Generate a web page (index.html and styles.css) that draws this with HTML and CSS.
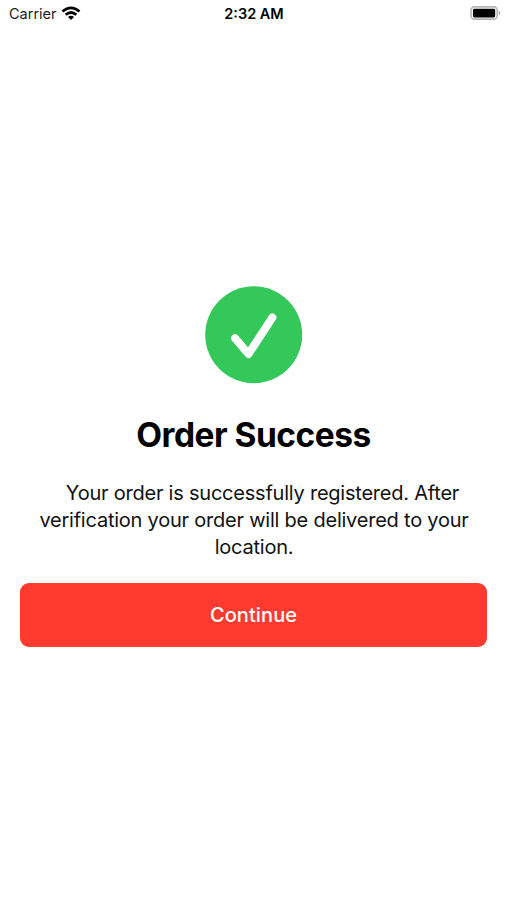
FILE: index.html
```html
<!DOCTYPE html>
<html lang="en">
<head>
<meta charset="utf-8">
<title>Order Success</title>
<link rel="stylesheet" href="styles.css">
</head>
<body>
<div class="screen">
<header class="status">
<div class="carrier"><span class="carrier-name">Carrier</span>
<svg class="wifi" viewBox="0 0 20 15" width="20" height="15"><g fill="none" stroke="#000" stroke-width="2.7"><path d="M1.5 5.5Q10 -1.7 18.5 5.5"/><path d="M4.7 8.7Q10 4.3 15.3 8.7"/></g><path d="M7 11Q10 8.6 13 11L10 14Z"/></svg></div>
<time class="clock">2:32 AM</time>
<div class="battery"><svg viewBox="0 0 31 14" width="31" height="14"><rect x="1" y=".9" width="26.2" height="12.2" rx="3.4" fill="none" stroke="#b5b5b5" stroke-width="1.6"/><rect x="3" y="2.7" width="22.2" height="8.8" rx="1.4"/><path d="M28.7 4.6Q30.4 5.5 30.4 7T28.7 9.4Z" fill="#aaa"/></svg></div>
</header>
<main class="content">
<svg class="check" viewBox="0 0 98 98" width="98" height="98"><circle cx="48.7" cy="48.7" r="48.5" fill="#34c759"/><path d="M30 52.2L43.5 68L67.4 31.5" fill="none" stroke="#fff" stroke-width="8" stroke-linecap="round" stroke-linejoin="round"/></svg>
<h1 class="title"><span>Order Success</span></h1>
<p class="message"><span class="line first">Your order is successfully registered. After</span><span class="line second">verification your order will be delivered to your</span><span class="line third">location.</span></p>
<button class="continue"><span>Continue</span></button>
</main>
</div>
</body>
</html>
```
FILE: styles.css
```css
* { box-sizing: border-box; }
body { margin: 0; background: #fff; color: #000; font-family: Inter, "Liberation Sans", sans-serif; }
.screen { width: 507px; height: 900px; overflow: hidden; }
.status { height: 26px; padding: 0 6px 0 9px; display: grid; grid-template-columns: 1fr auto 1fr; align-items: center; }
.carrier { display: flex; align-items: center; gap: 4px; font-size: 14.5px; color: #222; }
.clock { margin-right: 2px; font-size: 14.5px; font-weight: 600; }
.battery { display: flex; justify-content: flex-end; }
.content { padding: 260px 20px 0; display: flex; flex-direction: column; align-items: center; }
.check { display: block; }
.title { margin: 30px 0 0; font-size: 33.5px; line-height: 42px; font-weight: 650; letter-spacing: -0.5px; white-space: nowrap; }
.message { margin: 24px 0 0 1px; width: 467px; font-size: 20px; line-height: 27px; letter-spacing: -0.225px; text-align: center; color: #111; }
.line { display: block; white-space: nowrap; }
.first { padding-left: 17px; }
.continue { margin: 22px 0 0; width: 467px; height: 64px; border: 0; border-radius: 9px; background: #ff3b30; color: #fff; font: 550 20px/24px Inter, "Liberation Sans", sans-serif; letter-spacing: 0.1px; }
```
